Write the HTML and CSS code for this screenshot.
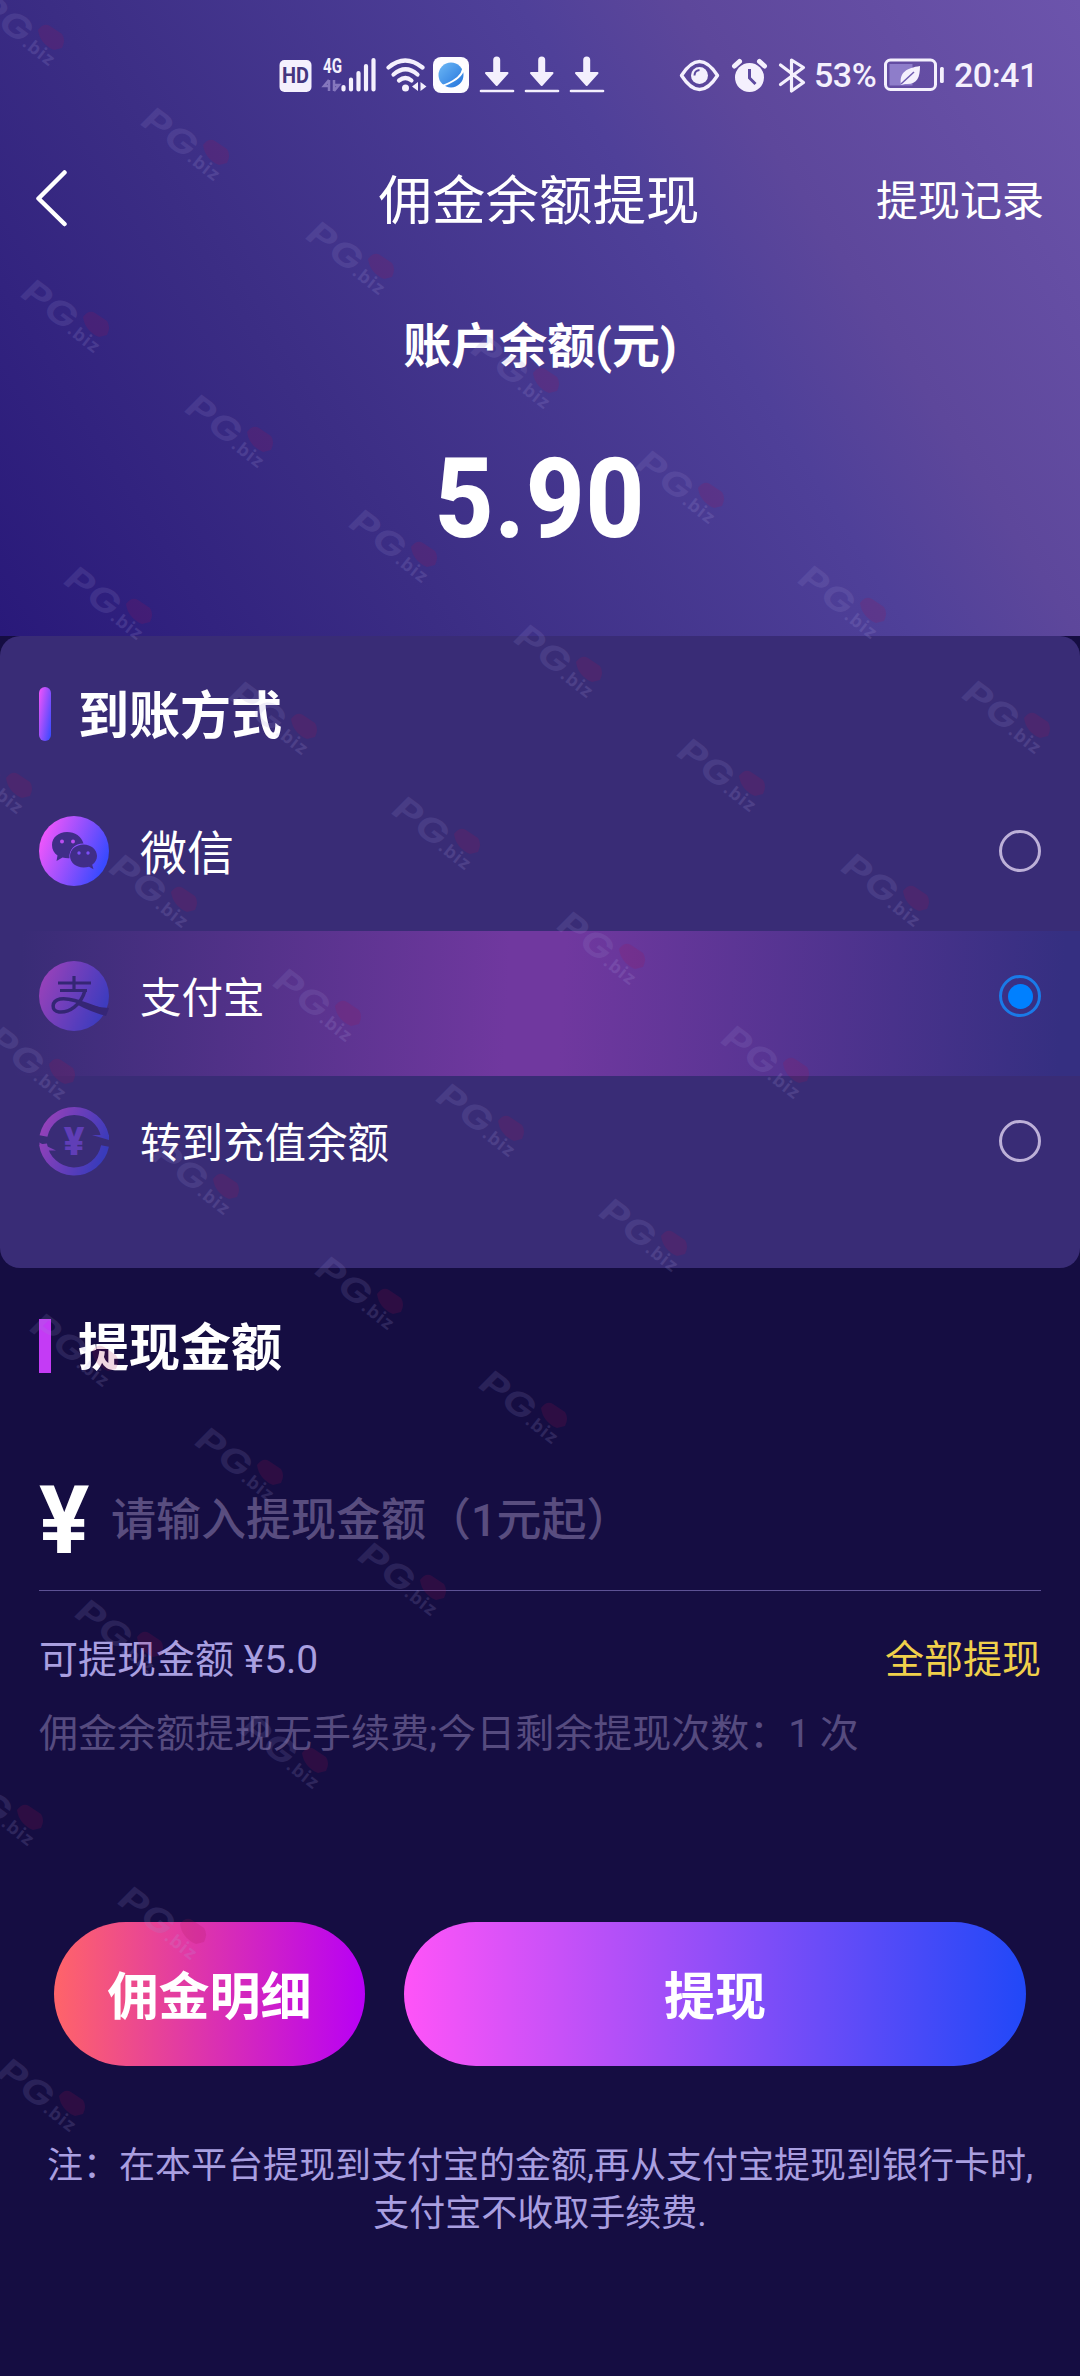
FILE: index.html
```html
<!DOCTYPE html>
<html lang="zh-CN">
<head>
<meta charset="utf-8">
<title>佣金余额提现</title>
<link rel="stylesheet" href="styles.css">
</head>
<body>
<div class="page">
  <header class="hero">
    <div class="status">
      <svg class="status-left" width="328" height="40" viewBox="278 55 328 40">
        <rect x="279.500" y="60" width="32" height="32" rx="5" fill="#f4f0fd"/>
        <text x="295.500" y="83" class="hd-text" text-anchor="middle" textLength="27" lengthAdjust="spacingAndGlyphs">HD</text>
        <text x="323" y="73" class="net-text" textLength="19" lengthAdjust="spacingAndGlyphs">4G</text>
        <path d="M329 80v11M329 80l-5 6h5M334 91V80M334 91l5-6h-5" stroke="#8577bd" stroke-width="2.500" fill="none"/>
        <path d="M343.500 87v2.500M351 79.500v10M358.500 73v16.500M366 66v23.500M373.500 60v29.500" stroke="#f4f0fd" stroke-width="4.200" stroke-linecap="round"/>
        <g fill="none" stroke="#f4f0fd" stroke-width="4.200" stroke-linecap="round">
          <path d="M388.500 67.500Q405 53.500 422.500 67.500"/>
          <path d="M393.500 74.500Q405.500 64 417.500 74.500"/>
          <path d="M399 80.500Q405.500 75.500 411.500 80.500"/>
        </g>
        <circle cx="405.500" cy="88" r="3.500" fill="#f4f0fd"/>
        <path d="M418 82v9l-6-4.500zM420.500 82v9l6-4.500z" fill="#f4f0fd"/>
        <rect x="433" y="57" width="36" height="36" rx="8" fill="#fdfcff"/>
        <circle cx="451" cy="75" r="12.500" fill="url(#globe)"/>
        <path d="M463 65q2 9-10 16t-15 4" stroke="#fff" stroke-width="2" fill="none"/>
        <g id="dl">
          <path d="M496.700 60v15" stroke="#f4f0fd" stroke-width="7" stroke-linecap="round"/>
          <path d="M486 73h21.500L496.700 85z" fill="#f4f0fd" stroke="#f4f0fd" stroke-width="2" stroke-linejoin="round"/>
          <path d="M481 91h32" stroke="#f4f0fd" stroke-width="2.600" stroke-linecap="round"/>
        </g>
        <use href="#dl" x="45"/>
        <use href="#dl" x="90"/>
        <defs>
          <linearGradient id="globe" x1="0" y1="0" x2="1" y2="1">
            <stop offset="0" stop-color="#6db8f5"/><stop offset="1" stop-color="#2373dc"/>
          </linearGradient>
        </defs>
      </svg>
      <svg class="status-mid" width="128" height="40" viewBox="678 55 128 40" fill="none" stroke="#f4f0fd">
        <path d="M680.500 75.500Q698.500 47.500 716.500 75.500Q698.500 103.500 680.500 75.500z" stroke-width="3.400" stroke-linejoin="round"/>
        <circle cx="698.500" cy="75.500" r="8.500" fill="#f4f0fd" stroke="none"/>
        <path d="M693.500 75.500q0-5 5-5.500" stroke="#5c4a9f" stroke-width="2"/>
        <circle cx="748.500" cy="77.500" r="14.500" fill="#f4f0fd" stroke="none"/>
        <path d="M733.500 66l5-4.500M763.500 66l-5-4.500" stroke-width="5" stroke-linecap="round"/>
        <path d="M748.500 69v9l6 6" stroke="#5d4aa0" stroke-width="3"/>
        <path d="M779.500 65l23 17.500-12 8.500V60l12 7.500-23 17" stroke-width="3.200" stroke-linejoin="round" stroke-linecap="round"/>
      </svg>
      <span class="percent">53%</span>
      <svg class="battery" width="62" height="34" viewBox="882 59 62 34">
        <rect x="884.500" y="61" width="50" height="29.500" rx="5" fill="none" stroke="#f4f0fd" stroke-width="3"/>
        <rect x="888.500" y="65" width="23" height="21.500" fill="#8e7dca"/>
        <rect x="939" y="68" width="3.800" height="16" rx="1.500" fill="#f4f0fd"/>
        <path d="M900 86c-2-13 6-17 19-19 0 12-3 19-15 18z" fill="#f4f0fd"/>
        <path d="M900 85l13-12" stroke="#6e5bb0" stroke-width="1.500"/>
      </svg>
      <span class="clock">20:41</span>
    </div>
    <nav class="nav">
      <svg class="back" width="34" height="60" viewBox="0 0 34 60"><path d="M30.500 2.500L4.500 28.500L30.500 54" fill="none" stroke="#fff" stroke-width="4.500" stroke-linecap="round" stroke-linejoin="round"/></svg>
      <h1 class="nav-title">佣金余额提现</h1>
      <a class="nav-link">提现记录</a>
    </nav>
    <p class="balance-label">账户余额(元)</p>
    <p class="balance">5.90</p>
  </header>

  <section class="methods">
    <h2 class="section-title"><i class="bar bar-gradient"></i><span class="title-text">到账方式</span></h2>
    <div class="method">
      <svg class="method-icon" viewBox="0 0 70 70">
        <circle cx="35" cy="35" r="35" fill="url(#brand)"/>
        <path d="M28 16c-8.500 0-15 5.500-15 13 0 4.500 2 8 5.500 10.500L17.500 45l6-3.500q3 .8 7 .7c-1-9 6-15 14-14.800C42.500 20.500 36 16 28 16z" fill="#402d88"/>
        <path d="M44.500 28.500c-7.500 0-13.500 5-13.500 11.500s6 11.500 13.500 11.500q3 0 5.500-.8l4.500 2.500-1.300-4.500C56.300 46.500 58 43.500 58 40c0-6.500-6-11.500-13.500-11.500z" fill="#402d88"/>
        <g fill="#b94ef0"><circle cx="23" cy="25.500" r="2"/><circle cx="34" cy="25.500" r="2"/></g>
        <g fill="#7a4df6"><circle cx="40" cy="37" r="1.700"/><circle cx="49" cy="37" r="1.700"/></g>
      </svg>
      <span class="method-name large">微信</span>
      <i class="radio"></i>
    </div>
    <div class="method selected">
      <svg class="method-icon dim" viewBox="0 0 70 70">
        <circle cx="35" cy="35" r="35" fill="url(#brand)"/>
        <g fill="none" stroke="#2b2070" stroke-width="3.200">
          <path d="M19 22h33M35 15v14M21 29.500h27"/>
          <path d="M46 29.500C42 44 30 52 20 51c-8-1-8-11 1-13 11-2 27 6 47 13" stroke-width="3.500"/>
        </g>
        <path d="M40 40q14 6 30 7l-3 8q-15-4-30-12z" fill="#2b2070"/>
      </svg>
      <span class="method-name">支付宝</span>
      <i class="radio checked"></i>
    </div>
    <div class="method">
      <svg class="method-icon dim" viewBox="0 0 70 70">
        <g fill="none" stroke="url(#brand)" stroke-width="8">
          <path d="M4.500 30A31.500 32 0 0 1 66 30"/>
          <path d="M4 38A31.500 32 0 0 0 66 40"/>
        </g>
        <path d="M53 29h17v5zM0 36.500l17 8H4z" fill="url(#brand)"/>
        <text x="35" y="49" class="yen-icon" text-anchor="middle">¥</text>
      </svg>
      <span class="method-name">转到充值余额</span>
      <i class="radio"></i>
    </div>
  </section>

  <section class="amount">
    <h2 class="section-title"><i class="bar bar-flat"></i><span class="title-text">提现金额</span></h2>
    <div class="amount-field"><span class="yen">¥</span><span class="placeholder">请输入提现金额（1元起）</span></div>
    <div class="available"><span>可提现金额 ¥5.0</span><a class="all">全部提现</a></div>
    <p class="hint">佣金余额提现无手续费;今日剩余提现次数：1 次</p>
  </section>

  <div class="actions">
    <a class="btn btn-detail">佣金明细</a>
    <a class="btn btn-withdraw">提现</a>
  </div>
  <p class="note">注：在本平台提现到支付宝的金额,再从支付宝提现到银行卡时,<br>支付宝不收取手续费.</p>

  <svg class="watermark" width="1080" height="2376" viewBox="0 0 1080 2376">
    <defs>
      <linearGradient id="brand" gradientUnits="userSpaceOnUse" x1="4" y1="20" x2="66" y2="45">
        <stop offset="0" stop-color="#ec56fb"/><stop offset="1" stop-color="#3a4aff"/>
      </linearGradient>
      <g id="wm">
        <text transform="translate(0 22) rotate(37) skewX(-8)" class="wm-pg" textLength="60" lengthAdjust="spacingAndGlyphs">PG</text>
        <text transform="translate(48 59) rotate(38)" class="wm-biz">.biz</text>
        <path d="M65 44q6-8 12-4l12 8q4 6 0 14l-8 2q-14-6-16-20z" class="wm-red"/>
      </g>
    </defs>
    <use href="#wm" x="-27" y="-14"/><use href="#wm" x="138" y="101"/><use href="#wm" x="303" y="215"/><use href="#wm" x="468" y="329"/><use href="#wm" x="633" y="444"/><use href="#wm" x="795" y="559"/><use href="#wm" x="959" y="674"/>
    <use href="#wm" x="18" y="273"/><use href="#wm" x="182" y="388"/><use href="#wm" x="346" y="503"/><use href="#wm" x="511" y="618"/><use href="#wm" x="674" y="732"/><use href="#wm" x="838" y="847"/>
    <use href="#wm" x="61" y="560"/><use href="#wm" x="226" y="675"/><use href="#wm" x="389" y="790"/><use href="#wm" x="554" y="905"/><use href="#wm" x="718" y="1019"/>
    <use href="#wm" x="-59" y="734"/><use href="#wm" x="106" y="848"/><use href="#wm" x="270" y="962"/><use href="#wm" x="433" y="1077"/><use href="#wm" x="596" y="1192"/>
    <use href="#wm" x="-16" y="1020"/><use href="#wm" x="148" y="1135"/><use href="#wm" x="312" y="1250"/><use href="#wm" x="476" y="1364"/>
    <use href="#wm" x="27" y="1307"/><use href="#wm" x="192" y="1421"/><use href="#wm" x="355" y="1536"/>
    <use href="#wm" x="72" y="1593"/><use href="#wm" x="237" y="1709"/>
    <use href="#wm" x="-48" y="1766"/><use href="#wm" x="115" y="1880"/><use href="#wm" x="-6" y="2052"/>
  </svg>
</div>
</body>
</html>
```
FILE: styles.css
```css
* { box-sizing: border-box; margin: 0; padding: 0; }
body {
  background: #150d42;
  color: #fff;
  font-family: Roboto, "Noto Sans CJK SC", sans-serif;
}
.page {
  position: relative;
  width: 1080px;
  height: 2376px;
  overflow: hidden;
  background: #150d42;
}
.hero {
  height: 636px;
  background: linear-gradient(58deg, #29197a 0%, #3b2d84 30%, #4f4099 62%, #5d479b 73%, #6c54ac 100%);
}
.status {
  display: flex;
  align-items: center;
  height: 150px;
  padding-left: 278px;
  color: #f4f0fd;
  font-size: 34px;
  line-height: 40px;
}
.status-mid { margin-left: 73px; }
.percent { width: 68px; margin-left: 7px; white-space: nowrap; letter-spacing: -0.5px; font-weight: 500; }
.battery { margin-left: 1px; }
.clock { margin-left: 9px; letter-spacing: -0.5px; font-weight: 500; }
.hd-text { font: 700 22px Roboto, sans-serif; fill: #43367f; }
.net-text { font: 700 20px Roboto, sans-serif; fill: #f4f0fd; }
.nav {
  display: grid;
  grid-template-columns: 200px 1fr 200px;
  align-items: center;
  height: 100px;
  padding: 0 36px 0 34px;
}
.nav-title { font-size: 53.500px; line-height: 60px; font-weight: 400; text-align: center; padding-top: 4px; }
.nav-link { font-size: 42px; line-height: 60px; text-align: right; padding-top: 4px; }
.balance-label {
  padding-top: 67px;
  font-size: 48px;
  line-height: 60px;
  font-weight: 700;
  text-align: center;
}
.balance {
  padding-top: 57px;
  font-size: 111px;
  line-height: 130px;
  font-weight: 800;
  letter-spacing: 1px;
  text-align: center;
  transform: scaleX(0.92);
}
.methods {
  height: 632px;
  border-radius: 20px;
  background: #392c76;
}
.section-title {
  display: flex;
  align-items: flex-start;
  padding-left: 39px;
  font-size: 51px;
  line-height: 60px;
  font-weight: 700;
}
.title-text { padding-top: 3px; }
.methods .section-title { padding-top: 48px; height: 150px; }
.bar { width: 12px; height: 54px; margin: 3px 27px 0 0; }
.bar-gradient { border-radius: 6px; background: linear-gradient(100deg, #e252fb 10%, #3a4bff 95%); }
.bar-flat { background: #c43bf5; }
.method {
  display: flex;
  align-items: center;
  height: 145px;
  padding: 0 39px 15px;
}
.selected { background: linear-gradient(93deg, rgba(112, 56, 160, 0) 2%, #70389f 47%, #70389f 52%, #352f81 98%); }
.method-icon { width: 70px; height: 70px; overflow: visible; }
.dim { opacity: 0.5; }
.yen-icon { font: 900 38px Roboto, sans-serif; fill: #8850f8; }
.method-name { flex: 1; padding: 5px 0 0 31px; font-size: 41.500px; line-height: 60px; }
.method-name.large { font-size: 47px; }
.radio {
  display: grid;
  place-items: center;
  width: 42px;
  height: 42px;
  border: 3px solid #bdb0d8;
  border-radius: 50%;
}
.checked { border-color: #1a7ae8; }
.checked::after { content: ""; width: 25px; height: 25px; border-radius: 50%; background: #0080ff; }
.amount { height: 654px; padding: 48px 39px 0; }
.amount .section-title { padding-left: 0; height: 60px; }
.amount-field {
  display: flex;
  align-items: center;
  height: 160px;
  margin-top: 55px;
  padding-top: 20px;
  border-bottom: 1.500px solid #5d5295;
}
.yen { width: 72px; font-size: 94px; line-height: 100px; font-weight: 700; }
.placeholder { font-size: 45px; line-height: 60px; font-weight: 500; color: #594d7f; }
.available {
  display: flex;
  justify-content: space-between;
  padding-top: 39px;
  font-size: 39px;
  line-height: 60px;
  color: #a99fe0;
}
.all { color: #f0d04b; }
.hint { padding-top: 14px; font-size: 39px; line-height: 60px; color: #564b7f; }
.actions { display: flex; gap: 39px; padding: 0 54px; }
.btn {
  height: 144px;
  border-radius: 72px;
  font-size: 51px;
  line-height: 151px;
  font-weight: 700;
  text-align: center;
}
.btn-detail { width: 311px; background: linear-gradient(90deg, #ff6469, #b800f5); }
.btn-withdraw { flex: 1; background: linear-gradient(90deg, #ff54f8, #2148f8); }
.note {
  padding-top: 76px;
  font-size: 36px;
  line-height: 48px;
  text-align: center;
  color: #a99fe0;
}
.watermark { position: absolute; left: 0; top: 0; pointer-events: none; opacity: 0.16; }
.wm-pg { font: 700 33px Inter, sans-serif; fill: #9a8fd2; }
.wm-biz { font: 700 18px Inter, sans-serif; fill: #b3a9e6; letter-spacing: 1px; }
.wm-red { fill: #a8104e; }
```
